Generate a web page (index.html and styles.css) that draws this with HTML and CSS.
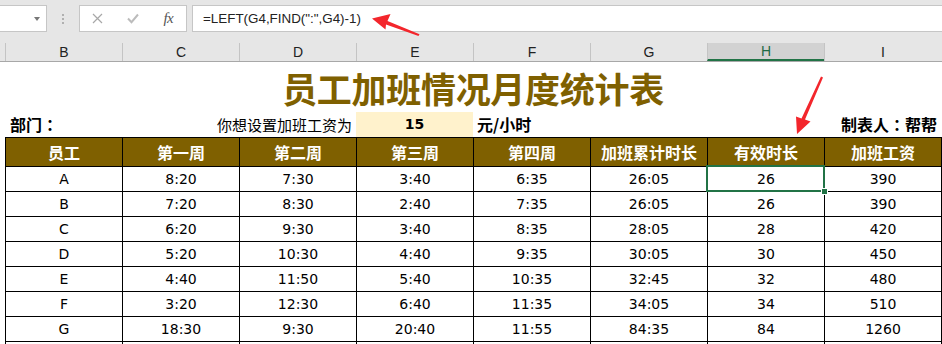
FILE: index.html
```html
<!DOCTYPE html>
<html lang="zh-CN">
<head>
<meta charset="utf-8">
<title>员工加班情况月度统计表</title>
<link rel="stylesheet" href="styles.css">
</head>
<body>
<div class="app">
  <div class="ribbon">
    <div class="toolbar">
      <div class="namebox"><span class="caret"></span></div>
      <div class="dots"><i></i><i></i><i></i></div>
      <div class="fxbtns">
        <span class="slot"><svg width="11" height="11" viewBox="0 0 11 11"><path d="M1 1L10 10M10 1L1 10" stroke="#a8a8a8" stroke-width="1.2" fill="none"/></svg></span>
        <span class="slot"><svg width="12" height="11" viewBox="0 0 12 11"><path d="M1 5.5L4.5 9.2L11 1.5" stroke="#bcbcbc" stroke-width="2" fill="none"/></svg></span>
        <span class="slot fx">fx</span>
      </div>
      <div class="formula">=LEFT(G4,FIND(":",G4)-1)</div>
    </div>
    <div class="colheads">
      <div class="ch ch-a"></div>
      <div class="ch">B</div>
      <div class="ch">C</div>
      <div class="ch">D</div>
      <div class="ch">E</div>
      <div class="ch">F</div>
      <div class="ch">G</div>
      <div class="ch active">H</div>
      <div class="ch">I</div>
    </div>
  </div>

  <div class="sheet">
    <div class="title">员工加班情况月度统计表</div>
    <div class="info">
      <div class="dept">部门<span class="colon" lang="zh-TW">：</span></div>
      <div class="ask">你想设置加班工资为</div>
      <div class="rate">15</div>
      <div class="unit">元/小时</div>
      <div class="maker">制表人<span class="colon" lang="zh-TW">：</span>帮帮</div>
    </div>
    <div class="grid">
      <div class="hd">员工</div><div class="hd">第一周</div><div class="hd">第二周</div><div class="hd">第三周</div><div class="hd">第四周</div><div class="hd">加班累计时长</div><div class="hd">有效时长</div><div class="hd">加班工资</div>

      <div class="c">A</div><div class="c">8:20</div><div class="c">7:30</div><div class="c">3:40</div><div class="c">6:35</div><div class="c">26:05</div><div class="c sel">26<span class="handle"></span></div><div class="c">390</div>
      <div class="c">B</div><div class="c">7:20</div><div class="c">8:30</div><div class="c">2:40</div><div class="c">7:35</div><div class="c">26:05</div><div class="c">26</div><div class="c">390</div>
      <div class="c">C</div><div class="c">6:20</div><div class="c">9:30</div><div class="c">3:40</div><div class="c">8:35</div><div class="c">28:05</div><div class="c">28</div><div class="c">420</div>
      <div class="c">D</div><div class="c">5:20</div><div class="c">10:30</div><div class="c">4:40</div><div class="c">9:35</div><div class="c">30:05</div><div class="c">30</div><div class="c">450</div>
      <div class="c">E</div><div class="c">4:40</div><div class="c">11:50</div><div class="c">5:40</div><div class="c">10:35</div><div class="c">32:45</div><div class="c">32</div><div class="c">480</div>
      <div class="c">F</div><div class="c">3:20</div><div class="c">12:30</div><div class="c">6:40</div><div class="c">11:35</div><div class="c">34:05</div><div class="c">34</div><div class="c">510</div>
      <div class="c">G</div><div class="c">18:30</div><div class="c">9:30</div><div class="c">20:40</div><div class="c">11:55</div><div class="c">84:35</div><div class="c">84</div><div class="c">1260</div>
      <div class="c"></div><div class="c"></div><div class="c"></div><div class="c"></div><div class="c"></div><div class="c"></div><div class="c"></div><div class="c"></div>
    </div>
  </div>

  <svg class="arrows" width="942" height="344" viewBox="0 0 942 344">
    <polygon fill="#f3262c" points="372,18.5 390.5,14 387.5,21 419.5,34.2 418.5,36 386,24.5 385.5,29.5"/>
    <polygon fill="#f3262c" points="797,134 796,116.5 801.5,118.5 821,76.5 823,77.5 805,119.5 810.5,121.5"/>
  </svg>
</div>
</body>
</html>
```

FILE: styles.css
```css
* { box-sizing: border-box; }
html, body { margin: 0; padding: 0; }
body {
  width: 942px;
  height: 344px;
  overflow: hidden;
  background: #fff;
  font-family: "DejaVu Sans", "Noto Sans CJK SC", sans-serif;
}
.app { position: relative; width: 942px; height: 344px; overflow: hidden; }

/* ribbon / formula bar */
.ribbon { background: #e6e6e6; }
.toolbar {
  height: 43px;
  display: flex;
  align-items: flex-start;
  padding-top: 5px;
}
.namebox {
  width: 47px;
  height: 27px;
  background: #fff;
  border: 1px solid #c6c6c6;
  border-left: none;
  position: relative;
  display: flex;
  align-items: center;
  justify-content: flex-end;
  padding-right: 6px;
}
.caret {
  width: 0; height: 0;
  border-left: 3.5px solid transparent;
  border-right: 3.5px solid transparent;
  border-top: 4px solid #777;
}
.dots {
  width: 32px;
  height: 27px;
  display: flex;
  flex-direction: column;
  align-items: center;
  justify-content: center;
  gap: 2px;
}
.dots i { display: block; width: 2px; height: 2px; background: #b0b0b0; }
.fxbtns {
  width: 108px;
  height: 27px;
  background: #fff;
  border: 1px solid #c6c6c6;
  display: flex;
  align-items: center;
}
.slot {
  width: 36px;
  display: flex;
  align-items: center;
  justify-content: center;
}
.fx {
  font-family: "Liberation Serif", serif;
  font-style: italic;
  font-size: 15px;
  color: #555;
  letter-spacing: -0.5px;
}
.formula {
  flex: 1;
  margin-left: 5px;
  height: 27px;
  background: #fff;
  border: 1px solid #c6c6c6;
  border-right: none;
  padding-left: 10px;
  font-family: "Liberation Sans", sans-serif;
  font-size: 13.4px;
  line-height: 25px;
  color: #222;
}

/* column headers */
.colheads {
  display: flex;
  height: 19px;
  border-bottom: 1px solid #a8a8a8;
}
.ch {
  width: 117px;
  flex: none;
  border-left: 1px solid #c4c4c4;
  font-family: "Liberation Sans", sans-serif;
  font-size: 14px;
  line-height: 18px;
  text-align: center;
  color: #222;
}
.ch-a { width: 5px; border-left: none; }
.ch.active {
  background: #d2d2d2;
  border-bottom: 2px solid #217346;
  color: #1f6b45;
  line-height: 17px;
}

/* sheet */
.sheet { padding-left: 5px; }
.title {
  width: 936px;
  height: 50px;
  text-align: center;
  font-family: "Noto Sans CJK SC", sans-serif;
  font-weight: 700;
  font-size: 35px;
  line-height: 52px;
  color: #7f6000;
  letter-spacing: -0.3px;
}
.info {
  display: grid;
  grid-template-columns: repeat(8, 117px);
  height: 25px;
  font-family: "Noto Sans CJK SC", sans-serif;
  font-size: 16px;
  line-height: 25px;
  color: #000;
}
.colon { font-family: "Noto Sans CJK TC", "Noto Sans CJK SC", sans-serif; }
.dept { font-weight: 700; padding-left: 5px; }
.ask { grid-column: span 2; text-align: right; padding-right: 4px; font-size: 15px; }
.rate {
  background: #fff2cc;
  text-align: center;
  font-family: "DejaVu Sans", sans-serif;
  font-weight: 700;
  font-size: 14px;
}
.unit { font-weight: 700; padding-left: 4px; }
.maker { grid-column: span 3; text-align: right; font-weight: 700; padding-right: 4px; }

.grid {
  display: grid;
  grid-template-columns: repeat(8, 116px);
  grid-template-rows: 28px;
  grid-auto-rows: 24px;
  gap: 1px;
  padding: 1px;
  background: #000;
  width: 937px;
}
.hd {
  background: #7f6000;
  color: #fff;
  font-family: "Noto Sans CJK SC", sans-serif;
  font-weight: 700;
  font-size: 16px;
  line-height: 28px;
  text-align: center;
}
.c {
  background: #fff;
  font-size: 14px;
  line-height: 24px;
  text-align: center;
  color: #000;
}
.sel { position: relative; }
.sel::after {
  content: "";
  position: absolute;
  left: -2px; top: -2px; right: -1px; bottom: -1px;
  border: 2px solid #217346;
}
.handle {
  position: absolute;
  right: -4px;
  bottom: -4px;
  width: 5px;
  height: 5px;
  background: #217346;
  border: 1px solid #fff;
  box-sizing: content-box;
  z-index: 2;
}

.arrows { position: absolute; left: 0; top: 0; pointer-events: none; }
```
